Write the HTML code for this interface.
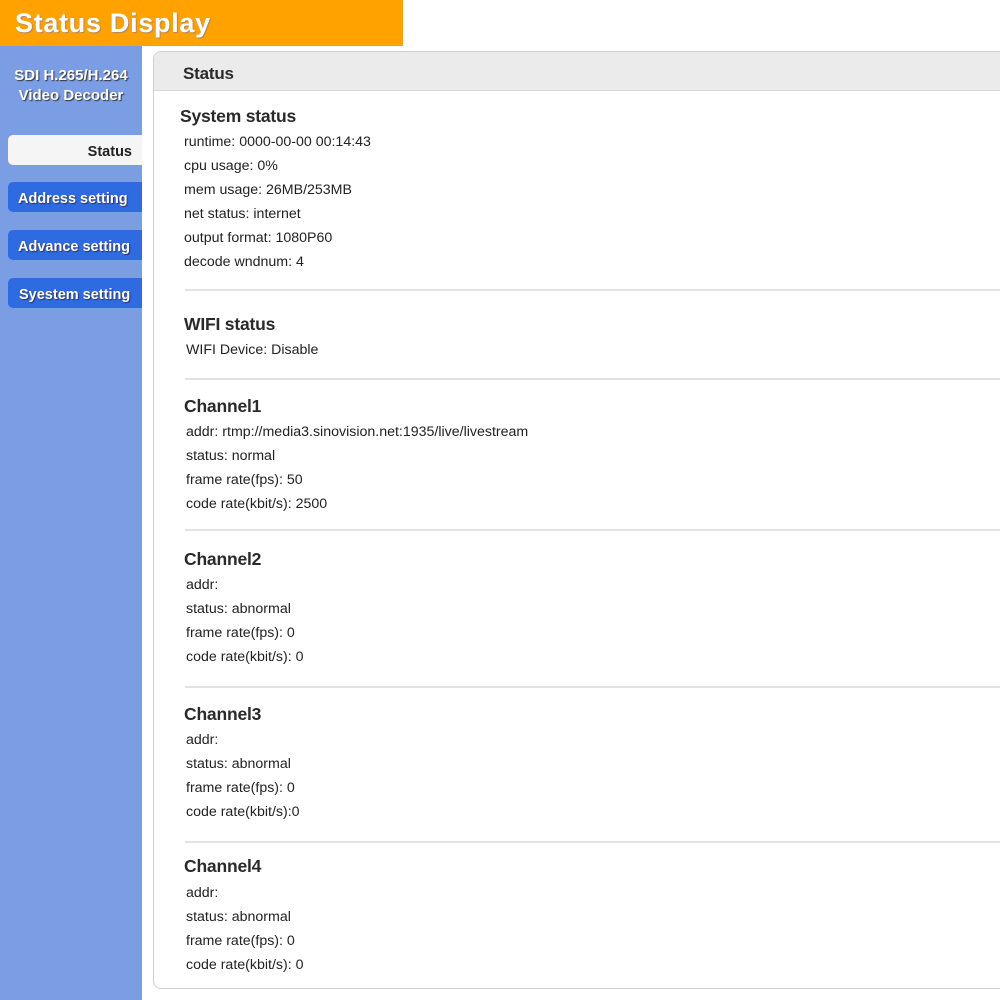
<!DOCTYPE html>
<html><head><meta charset="utf-8"><style>
body{margin:0;width:1000px;height:1000px;position:relative;overflow:hidden;background:#fff;font-family:"Liberation Sans",Arial,sans-serif;color:#222}
.a{position:absolute;white-space:nowrap}
.t{font-size:14.2px;line-height:18px;color:#222}
.h{font-size:17.5px;line-height:22px;color:#2a2a2a;font-weight:bold;letter-spacing:-0.2px}
.d{position:absolute;left:185px;width:815px;height:2px;background:#e2e2e2}
.nav{position:absolute;left:8px;width:134px;height:30px;line-height:34px;font-size:14.5px;font-weight:bold;color:#fff;border-radius:5px 0 0 5px;background:#2f6be0;text-shadow:1px 1px 1px #335}
</style></head><body>
<div class="a" style="left:0;top:0;width:403px;height:46px;background:#ffa200"></div>
<div class="a" style="left:15px;top:8px;font-size:27px;font-weight:bold;color:#fff;letter-spacing:0.7px;text-shadow:1px 1px 1px #a86">Status Display</div>
<div class="a" style="left:0;top:46px;width:142px;height:954px;background:#7b9de4"></div>
<div class="a" style="left:0;top:66px;width:142px;text-align:center;font-size:15px;line-height:20px;font-weight:bold;color:#fff;text-shadow:1px 1px 1px #333">SDI H.265/H.264<br>Video Decoder</div>
<div class="nav" style="top:135px;background:#f5f5f5;color:#222;text-align:right;text-shadow:none;box-sizing:border-box;padding-right:10px">Status</div>
<div class="nav" style="top:182px;padding-left:10px;box-sizing:border-box">Address setting</div>
<div class="nav" style="top:230px;padding-left:10px;box-sizing:border-box">Advance setting</div>
<div class="nav" style="top:278px;padding-left:11px;box-sizing:border-box">Syestem setting</div>
<div class="a" style="left:153px;top:51px;width:860px;height:936px;border:1px solid #cfcfcf;border-radius:8px;background:#fff"></div>
<div class="a" style="left:154px;top:52px;width:846px;height:38px;background:#ebebeb;border-radius:7px 0 0 0;border-bottom:1px solid #d8d8d8"></div>
<div class="a h" style="left:183px;top:63px;font-size:17px">Status</div>

<div class="a h" style="left:180px;top:105px">System status</div>
<div class="a t" style="left:184px;top:133px">runtime: 0000-00-00 00:14:43</div>
<div class="a t" style="left:184px;top:157px">cpu usage: 0%</div>
<div class="a t" style="left:184px;top:181px">mem usage: 26MB/253MB</div>
<div class="a t" style="left:184px;top:205px">net status: internet</div>
<div class="a t" style="left:184px;top:229px">output format: 1080P60</div>
<div class="a t" style="left:184px;top:253px">decode wndnum: 4</div>
<div class="d" style="top:289px"></div>

<div class="a h" style="left:184px;top:313px">WIFI status</div>
<div class="a t" style="left:186px;top:341px">WIFI Device: Disable</div>
<div class="d" style="top:378px"></div>

<div class="a h" style="left:184px;top:395px">Channel1</div>
<div class="a t" style="left:186px;top:423px">addr: rtmp://media3.sinovision.net:1935/live/livestream</div>
<div class="a t" style="left:186px;top:447px">status: normal</div>
<div class="a t" style="left:186px;top:471px">frame rate(fps): 50</div>
<div class="a t" style="left:186px;top:495px">code rate(kbit/s): 2500</div>
<div class="d" style="top:529px"></div>

<div class="a h" style="left:184px;top:548px">Channel2</div>
<div class="a t" style="left:186px;top:576px">addr:</div>
<div class="a t" style="left:186px;top:600px">status: abnormal</div>
<div class="a t" style="left:186px;top:624px">frame rate(fps): 0</div>
<div class="a t" style="left:186px;top:648px">code rate(kbit/s): 0</div>
<div class="d" style="top:686px"></div>

<div class="a h" style="left:184px;top:703px">Channel3</div>
<div class="a t" style="left:186px;top:731px">addr:</div>
<div class="a t" style="left:186px;top:755px">status: abnormal</div>
<div class="a t" style="left:186px;top:779px">frame rate(fps): 0</div>
<div class="a t" style="left:186px;top:803px">code rate(kbit/s):0</div>
<div class="d" style="top:841px"></div>

<div class="a h" style="left:184px;top:855px">Channel4</div>
<div class="a t" style="left:186px;top:884px">addr:</div>
<div class="a t" style="left:186px;top:908px">status: abnormal</div>
<div class="a t" style="left:186px;top:932px">frame rate(fps): 0</div>
<div class="a t" style="left:186px;top:956px">code rate(kbit/s): 0</div>
</body></html>
